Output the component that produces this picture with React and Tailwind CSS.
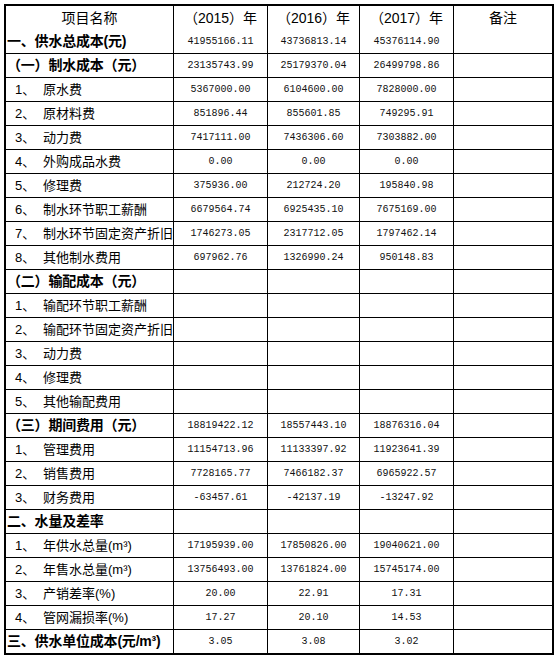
import React from "react";

const rows = [
  { label: "一、供水总成本(元)", bold: true, v: ["41955166.11", "43736813.14", "45376114.90"] },
  { label: "（一）制水成本（元）", bold: true, v: ["23135743.99", "25179370.04", "26499798.86"] },
  { pre: "1、", label: "原水费", v: ["5367000.00", "6104600.00", "7828000.00"] },
  { pre: "2、", label: "原材料费", v: ["851896.44", "855601.85", "749295.91"] },
  { pre: "3、", label: "动力费", v: ["7417111.00", "7436306.60", "7303882.00"] },
  { pre: "4、", label: "外购成品水费", v: ["0.00", "0.00", "0.00"] },
  { pre: "5、", label: "修理费", v: ["375936.00", "212724.20", "195840.98"] },
  { pre: "6、", label: "制水环节职工薪酬", v: ["6679564.74", "6925435.10", "7675169.00"] },
  { pre: "7、", label: "制水环节固定资产折旧", v: ["1746273.05", "2317712.05", "1797462.14"] },
  { pre: "8、", label: "其他制水费用", v: ["697962.76", "1326990.24", "950148.83"] },
  { label: "（二）输配成本（元）", bold: true },
  { pre: "1、", label: "输配环节职工薪酬" },
  { pre: "2、", label: "输配环节固定资产折旧" },
  { pre: "3、", label: "动力费" },
  { pre: "4、", label: "修理费" },
  { pre: "5、", label: "其他输配费用" },
  { label: "（三）期间费用（元）", bold: true, v: ["18819422.12", "18557443.10", "18876316.04"] },
  { pre: "1、", label: "管理费用", v: ["11154713.96", "11133397.92", "11923641.39"] },
  { pre: "2、", label: "销售费用", v: ["7728165.77", "7466182.37", "6965922.57"] },
  { pre: "3、", label: "财务费用", v: ["-63457.61", "-42137.19", "-13247.92"] },
  { label: "二、水量及差率", bold: true },
  { pre: "1、", label: "年供水总量(m³)", v: ["17195939.00", "17850826.00", "19040621.00"] },
  { pre: "2、", label: "年售水总量(m³)", v: ["13756493.00", "13761824.00", "15745174.00"] },
  { pre: "3、", label: "产销差率(%)", v: ["20.00", "22.91", "17.31"] },
  { pre: "4、", label: "管网漏损率(%)", v: ["17.27", "20.10", "14.53"] },
  { label: "三、供水单位成本(元/m³)", bold: true, v: ["3.05", "3.08", "3.02"] },
];

const cjk = "font-['Liberation_Sans','Noto_Sans_CJK_SC',sans-serif]";
const num = "font-['Liberation_Mono','Noto_Sans_CJK_SC',monospace]";

function Cell({ children, className = "" }) {
  return (
    <div className={"bg-white flex items-center overflow-hidden whitespace-nowrap " + className}>
      {children}
    </div>
  );
}

export default function App() {
  return (
    <div className="bg-white w-[559px] h-[662px] p-1">
      <div className="border-2 border-black bg-black w-[550px]">
        <div
          className={
            "grid grid-cols-[167px_93px_91px_93px_98px] auto-rows-[23px] gap-px text-black " + cjk
          }
        >
          {/* header */}
          <Cell className="justify-center text-[14px] h-[24px]">项目名称</Cell>
          <Cell className="justify-center text-[14px] h-[24px]">（2015）年</Cell>
          <Cell className="justify-center text-[14px] h-[24px]">（2016）年</Cell>
          <Cell className="justify-center text-[14px] h-[24px]">（2017）年</Cell>
          <Cell className="justify-center text-[14px] h-[24px]">备注</Cell>

          {rows.map((r, i) => (
            <React.Fragment key={i}>
              {r.bold ? (
                <Cell className="pl-px text-[14px] font-bold tracking-[-0.2px]">{r.label}</Cell>
              ) : (
                <Cell className="pl-[9px] text-[13px]">
                  <span className="inline-block w-[28px]">{r.pre}</span>
                  {r.label}
                </Cell>
              )}
              {[0, 1, 2].map((j) => (
                <Cell key={j} className={"justify-center text-[10px] text-[#111] " + num}>
                  {r.v ? r.v[j] : ""}
                </Cell>
              ))}
              <Cell />
            </React.Fragment>
          ))}
        </div>
      </div>
    </div>
  );
}
